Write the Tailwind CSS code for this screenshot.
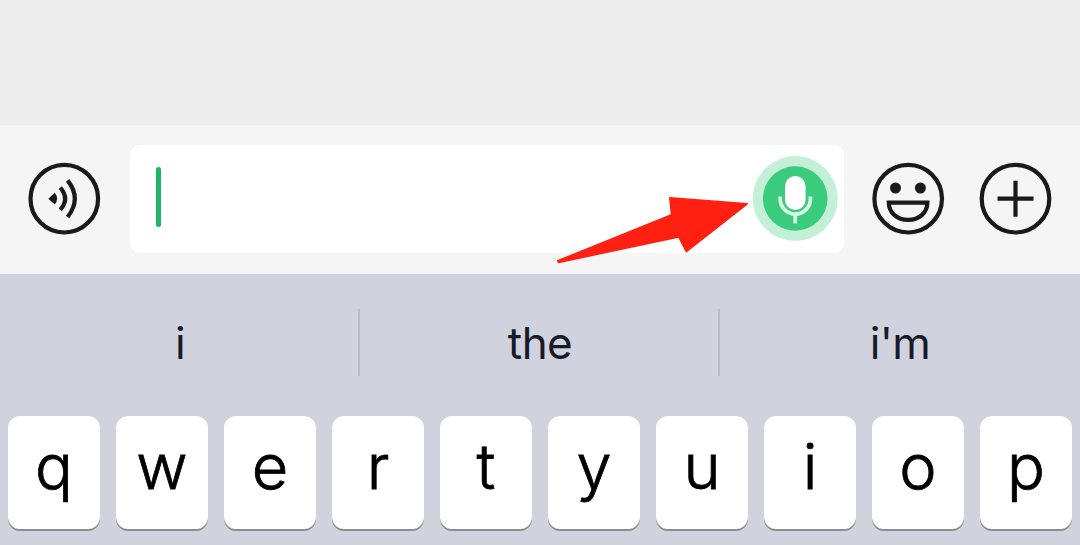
<!DOCTYPE html>
<html lang="en">

<head>
   <meta charset="UTF-8">
   <meta name="viewport" content="width=device-width, initial-scale=1.0">
   <title>Chat keyboard</title>
   <script src="https://cdn.jsdelivr.net/npm/@tailwindcss/browser@4"></script>
</head>

<body class="bg-[#ededed] font-['Inter',sans-serif]">
   <div class="relative flex flex-col w-[1080px] h-[545px] overflow-hidden">
      <!-- chat area -->
      <div class="h-[125px] shrink-0 bg-[#ededed] border-b border-[#e9e9e9]"></div>

      <!-- input bar -->
      <div class="flex items-center h-[149px] shrink-0 pl-7 pr-7 pb-0.5 bg-[#f5f5f5]">
         <button class="size-[73px] shrink-0">
            <svg viewBox="28 162 73 73" class="size-full" fill="none" stroke="#1a1a1a" stroke-width="4.2">
               <circle cx="64.3" cy="198.7" r="33.8" />
               <path d="M48.3 198.7L54.8 192.8Q59.4 198.7 54.8 204.6Z" fill="#1a1a1a" stroke="none" />
               <path d="M60.3 187.6Q70 198.7 60.3 209.8" />
               <path d="M67.6 180.4Q82 198.7 67.6 217" />
            </svg>
         </button>

         <div class="flex items-center justify-between w-[714px] h-[108px] ml-[29px] pl-[26px] pr-1.5 pb-0.5 rounded-[10px] bg-white">
            <div class="w-[5px] h-[60px] -mt-0.5 rounded-full bg-[#1fb46a]"></div>
            <button class="size-[86px]">
               <svg viewBox="752 155 86 86" class="size-full" fill="none">
                  <circle cx="795.2" cy="198.5" r="42.5" fill="#c3f0d7" />
                  <circle cx="795.2" cy="198.5" r="32.3" fill="#3acb7c" />
                  <rect x="785" y="176" width="20.6" height="34" rx="10.3" fill="#fff" />
                  <path d="M780.2 196.5V199A15.1 15.1 0 0 0 810.4 199V196.5" stroke="#d5f7e4" stroke-width="3.8" />
                  <path d="M795.2 215V223.5" stroke="#d5f7e4" stroke-width="3.8" />
               </svg>
            </button>
         </div>

         <button class="size-[73px] shrink-0 ml-7">
            <svg viewBox="872 162 73 73" class="size-full" fill="none" stroke="#1a1a1a" stroke-width="4.2">
               <circle cx="908.2" cy="198.7" r="33.8" />
               <circle cx="895.5" cy="188" r="5.5" fill="#1a1a1a" stroke="none" />
               <circle cx="920.4" cy="188" r="5.5" fill="#1a1a1a" stroke="none" />
               <path d="M888.8 202.6H927.4C927.4 213 919 219.8 908.1 219.8S888.8 213 888.8 202.6Z" />
            </svg>
         </button>

         <button class="size-[73px] shrink-0 ml-[34px]">
            <svg viewBox="979 162 73 73" class="size-full" fill="none" stroke="#1a1a1a" stroke-width="4.2">
               <circle cx="1015.5" cy="198.7" r="33.8" />
               <path d="M997.5 198.7H1033.5M1015.5 180.7V216.7" />
            </svg>
         </button>
      </div>

      <!-- keyboard -->
      <div class="flex flex-col grow bg-[#d0d3de]">
         <div class="grid grid-cols-3 h-[142px] shrink-0 pt-[35px] text-[44px] leading-[68px] tracking-[-0.6px] text-center text-[#171a28]">
            <div class="h-[67px] pl-0.5 border-r-2 border-[#b9bcc7]">i</div>
            <div class="h-[67px] pl-0.5 border-r-2 border-[#b9bcc7]">the</div>
            <div class="h-[67px]">i'm</div>
         </div>
         <div id="keys" class="grid grid-cols-10 gap-4 px-2"></div>
      </div>

      <!-- arrow pointing at the mic -->
      <svg class="absolute left-0 top-0 pointer-events-none" width="1080" height="280" viewBox="0 0 1080 280">
         <path d="M557.8 260.8L671.6 214.8L669.8 197.8L747.2 203.8L686.3 251.6L678.8 237L558.6 262.4Z"
            fill="#ff2012" stroke="#ff2012" stroke-width="1.6" stroke-linejoin="round" />
      </svg>
   </div>

   <script>
      const keys = document.getElementById("keys");

      "qwertyuiop".split("").forEach((letter) => {
         const key = document.createElement("button");
         key.className =
            "h-[113px] pb-[13px] rounded-[12px] bg-white text-[63px] leading-[100px] font-light text-black [-webkit-text-stroke:0.8px_black] shadow-[0_2px_0_#8b8d93]";
         key.textContent = letter;
         keys.appendChild(key);
      });
   </script>
</body>

</html>
